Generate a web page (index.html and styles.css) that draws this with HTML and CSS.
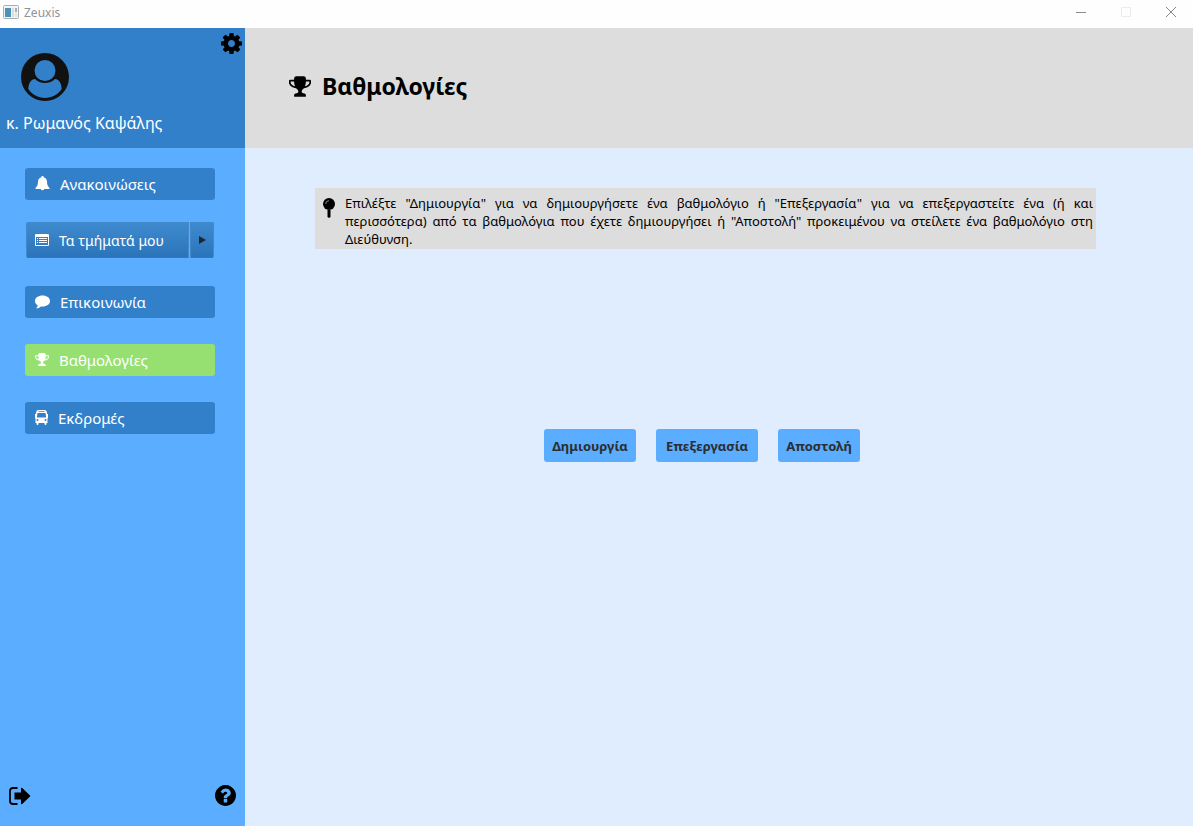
FILE: index.html
```html
<!DOCTYPE html>
<html lang="el">
<head>
<meta charset="utf-8">
<title>Zeuxis</title>
<link rel="stylesheet" href="styles.css">
</head>
<body>
<svg class="defs" aria-hidden="true">
  <symbol id="trophy" viewBox="64 128 1664 1536"><path d="M522 883q-74-162-74-371h-256v96q0 78 94.500 162t235.500 113zm1078-275v-96h-256q0 209-74 371 141-29 235.500-113t94.500-162zm128-128v128q0 71-41.500 143t-112 130-173 97.500-215.500 44.500q-42 54-95 95-38 34-52.500 72.500t-14.500 89.500q0 54 30.500 91t97.500 37q75 0 133.500 45.500t58.500 114.500v64q0 14-9 23t-23 9h-832q-14 0-23-9t-9-23v-64q0-69 58.500-114.500t133.500-45.500q67 0 97.500-37t30.500-91q0-51-14.500-89.500t-52.500-72.500q-53-41-95-95-113-5-215.500-44.500t-173-97.500-112-130-41.500-143v-128q0-40 28-68t68-28h288v-96q0-66 47-113t113-47h576q66 0 113 47t47 113v96h288q40 0 68 28t28 68z"/></symbol>
</svg>
<header class="titlebar">
  <svg class="app-icon" viewBox="0 0 16 14" aria-hidden="true">
    <rect x="0.500" y="0.500" width="15" height="13" rx="1" fill="#f4f4f4" stroke="#a9adb0"/>
    <rect x="2" y="3" width="6" height="9" fill="#4a92b8"/>
    <rect x="9" y="3" width="2" height="9" fill="#dcdcdc"/>
    <rect x="12" y="3" width="2" height="4" fill="#9fb0c4"/>
    <rect x="12" y="8" width="2" height="4" fill="#e3e3e3"/>
  </svg>
  <span class="app-name">Zeuxis</span>
  <button class="win-button" aria-label="Ελαχιστοποίηση"><svg width="12" height="12" viewBox="0 0 12 12"><path d="M1 6.500h10" stroke="#8b8b8b"/></svg></button>
  <button class="win-button" aria-label="Μεγιστοποίηση" disabled><svg width="12" height="12" viewBox="0 0 12 12"><path d="M1.500 1.500h9v9h-9z" fill="none" stroke="#e6edec"/></svg></button>
  <button class="win-button" aria-label="Κλείσιμο"><svg width="12" height="12" viewBox="0 0 12 12"><path d="M1 1l10 10M11 1L1 11" stroke="#858585"/></svg></button>
</header>
<div class="app">
  <aside class="sidebar">
    <div class="profile">
      <button class="icon-button settings" aria-label="Ρυθμίσεις">
        <svg width="21" height="21" viewBox="128 128 1536 1536"><path d="M1152 896q0-106-75-181t-181-75-181 75-75 181 75 181 181 75 181-75 75-181zm512-109v222q0 12-8 23t-20 13l-185 28q-19 54-39 91 35 50 107 138 10 12 10 25t-9 23q-27 37-99 108t-94 71q-12 0-26-9l-138-108q-44 23-91 38-16 136-29 186-7 28-36 28h-222q-14 0-24.500-8.500t-11.500-21.500l-28-184q-49-16-90-37l-141 107q-10 9-25 9-14 0-25-11-126-114-165-168-7-10-7-23 0-12 8-23 15-21 51-66.500t54-70.500q-27-50-41-99l-183-27q-13-2-21-12.500t-8-23.500v-222q0-12 8-23t19-13l186-28q14-46 39-92-40-57-107-138-10-12-10-24 0-10 9-23 26-36 98.500-107.500t94.500-71.500q13 0 26 10l138 107q44-23 91-38 16-136 29-186 7-28 36-28h222q14 0 24.500 8.500t11.500 21.500l28 184q49 16 90 37l142-107q9-9 24-9 13 0 25 10 129 119 165 170 7 8 7 22 0 12-8 23-15 21-51 66.500t-54 70.500q26 50 41 98l183 28q13 2 21 12.500t8 23.500z"/></svg>
      </button>
      <svg class="avatar" viewBox="0 0 48 48" aria-hidden="true">
        <circle cx="24" cy="24" r="24" fill="#111"/>
        <circle cx="24" cy="17.500" r="10.500" fill="#3280ca"/>
        <path d="M14 26C9.500 26.500 7.500 31 7.300 36C11 41.500 17 45 24 45S37 41.500 40.700 36C40.500 31 38.500 26.500 34 26C31.500 28.500 28 30 24 30S16.500 28.500 14 26Z" fill="#3280ca"/>
      </svg>
      <span class="user-name">κ. Ρωμανός Καψάλης</span>
    </div>
    <nav class="menu">
      <button class="menu-item">
        <svg class="menu-icon" viewBox="0 0 15 15"><path d="M7.500 0C8.300 0 8.700.6 8.600 1.200C11 1.800 12 3.600 12 5.600C12 9 13 10.500 14.500 12V13H9.300A1.900 1.900 0 0 1 5.700 13H.5V12C2 10.500 3 9 3 5.600C3 3.600 4 1.800 6.400 1.200C6.300.6 6.700 0 7.500 0Z"/></svg>
        Ανακοινώσεις
      </button>
      <div class="split">
        <button class="split-main">
          <svg class="menu-icon list" viewBox="0 0 14 12"><path fill-rule="evenodd" d="M1 0H13Q14 0 14 1V11Q14 12 13 12H1Q0 12 0 11V1Q0 0 1 0ZM1 3V11H13V3Z"/><path d="M2 4h1v1H2zM4 4h8v1H4zM2 6h1v1H2zM4 6h8v1H4zM2 8h1v1H2zM4 8h8v1H4z"/></svg>
          Τα τμήματά μου
        </button>
        <button class="split-arrow" aria-label="Προβολή τμημάτων"><svg width="7" height="8" viewBox="0 0 7 8"><path d="M0 0L7 4L0 8Z" fill="#1c2733"/></svg></button>
      </div>
      <button class="menu-item">
        <svg class="menu-icon" viewBox="0 0 15 15"><path d="M7.500 1.500C11.700 1.500 15 3.800 15 7S11.700 12.500 7.500 12.500L6 12.400C4.600 13.700 3 14.200 1.200 14.300C2 13.500 2.600 12.500 2.700 11.300C1 10.300 0 8.800 0 7C0 3.800 3.300 1.500 7.500 1.500Z"/></svg>
        Επικοινωνία
      </button>
      <button class="menu-item active" aria-current="page">
        <svg class="menu-icon trophy"><use href="#trophy"/></svg>
        Βαθμολογίες
      </button>
      <button class="menu-item">
        <svg class="menu-icon bus" viewBox="0 0 13 15"><path fill-rule="evenodd" d="M3.500 0H9.500Q11.500 0 11.800 2L12.200 4H13V8L12.500 8.500V13H11.500V14Q11.500 15 10.500 15T9.500 14V13H3.500V14Q3.500 15 2.500 15T1.500 14V13H.5V8.500L0 8V4H.8L1.200 2Q1.500 0 3.500 0ZM3.500 1V1.800H9.500V1ZM2.500 3L1.900 7.500H11.100L10.500 3ZM2.500 9A1 1 0 0 0 2.500 11A1 1 0 0 0 2.500 9ZM10.500 9A1 1 0 0 0 10.500 11A1 1 0 0 0 10.500 9Z"/></svg>
        Εκδρομές
      </button>
    </nav>
    <footer class="sidebar-footer">
      <button class="icon-button" aria-label="Αποσύνδεση">
        <svg width="22" height="18" viewBox="0 0 22 18"><path d="M8.500 1H4Q1 1 1 4V14Q1 17 4 17H8.500" fill="none" stroke="#000" stroke-width="1.800"/><path d="M5.500 5.500H12V1L13 .8L21.500 9L13 17.200L12 17V12.500H5.500Z"/></svg>
      </button>
      <button class="icon-button" aria-label="Βοήθεια">
        <svg width="21" height="21" viewBox="128 128 1536 1536"><path d="M1024 1376v-192q0-14-9-23t-23-9h-192q-14 0-23 9t-9 23v192q0 14 9 23t23 9h192q14 0 23-9t9-23zm256-672q0-88-55.500-163t-138.500-116-170-41q-243 0-371 213-15 24 8 42l132 100q7 6 19 6 16 0 25-12 53-68 86-92 34-24 86-24 48 0 85.500 26t37.500 59q0 38-20 61t-68 45q-63 28-115.500 86.500t-52.500 125.500v36q0 14 9 23t23 9h192q14 0 23-9t9-23q0-19 21.500-49.500t54.500-49.500q32-18 49-28.500t46-35 44.500-48 28-60.500 12.500-81zm384 192q0 209-103 385.500t-279.500 279.500-385.500 103-385.500-103-279.500-279.500-103-385.500 103-385.500 279.500-279.500 385.500-103 385.500 103 279.500 279.500 103 385.500z"/></svg>
      </button>
    </footer>
  </aside>
  <main class="main">
    <div class="page-header">
      <svg class="page-icon" aria-hidden="true"><use href="#trophy"/></svg>
      <h1 class="page-title">Βαθμολογίες</h1>
    </div>
    <section class="content">
      <div class="note">
        <svg class="pin" viewBox="0 0 12 20" aria-hidden="true"><circle cx="6" cy="6" r="6"/><path d="M4.500 12h3v7L6 20L4.500 19z"/><path d="M2.700 6A3.300 3.300 0 0 1 6 2.700" fill="none" stroke="#aaa" stroke-width=".8"/></svg>
        <p class="note-text">Επιλέξτε "Δημιουργία" για να δημιουργήσετε ένα βαθμολόγιο ή "Επεξεργασία" για να επεξεργαστείτε ένα (ή και περισσότερα) από τα βαθμολόγια που έχετε δημιουργήσει ή "Αποστολή" προκειμένου να στείλετε ένα βαθμολόγιο στη Διεύθυνση.</p>
      </div>
      <div class="actions">
        <button class="action">Δημιουργία</button>
        <button class="action wide">Επεξεργασία</button>
        <button class="action">Αποστολή</button>
      </div>
    </section>
  </main>
</div>
</body>
</html>
```
FILE: styles.css
```css
* {
  box-sizing: border-box;
}

body {
  margin: 0;
  min-height: 100vh;
  display: flex;
  flex-direction: column;
  background: #e0edff;
  color: #000;
  font-family: "Noto Sans", "Open Sans", sans-serif;
}

button {
  margin: 0;
  padding: 0;
  border: 0;
  background: none;
  color: inherit;
  font: inherit;
}

svg {
  display: block;
  flex: none;
}

.defs {
  position: absolute;
  width: 0;
  height: 0;
}

.titlebar {
  display: flex;
  align-items: center;
  height: 28px;
  padding: 0 0 4px 3px;
  background: #fefefe;
}

.app-icon {
  width: 16px;
  height: 14px;
}

.app-name {
  flex: 1;
  margin-left: 5px;
  color: #929292;
  font-size: 12px;
}

.win-button {
  display: flex;
  justify-content: center;
  align-items: center;
  width: 45px;
  height: 24px;
}

.app {
  flex: 1;
  display: flex;
}

.sidebar {
  flex: none;
  width: 245px;
  display: flex;
  flex-direction: column;
  background: #5aadff;
}

.profile {
  position: relative;
  height: 120px;
  padding: 25px 6px 0;
  background: #3280ca;
}

.settings {
  position: absolute;
  top: 5px;
  right: 3px;
}

.avatar {
  width: 48px;
  height: 48px;
  margin: 0 0 12px 15px;
}

.user-name {
  display: block;
  color: #fff;
  font-size: 16px;
  line-height: 20px;
}

.menu {
  flex: 1;
  display: flex;
  flex-direction: column;
  gap: 26px;
  padding: 20px 30px 20px 25px;
  color: #fff;
  font-size: 15px;
}

.menu-item {
  display: flex;
  align-items: center;
  gap: 10px;
  height: 32px;
  padding: 0 10px 1px;
  border-radius: 3px;
  background: #3280ca;
}

.menu-item.active {
  background: #96e072;
}

.menu-icon {
  width: 15px;
  height: 15px;
  fill: #fff;
}

.menu-icon.trophy {
  width: 14px;
  height: 13px;
}

.menu-icon.list {
  width: 14px;
  height: 12px;
}

.menu-icon.bus {
  width: 13px;
}

.split {
  display: flex;
  gap: 1px;
  height: 36px;
  margin: -4px 1px 2px;
  font-size: 14px;
}

.split-main,
.split-arrow {
  display: flex;
  align-items: center;
  border: 1px solid #4189cc;
  border-bottom-color: #3179bd;
  background: linear-gradient(#3f8acf, #2b74b9);
}

.split-main {
  flex: 1;
  gap: 10px;
  padding-left: 8px;
  border-radius: 2px 0 0 2px;
}

.split-arrow {
  justify-content: center;
  width: 24px;
  border-radius: 0 2px 2px 0;
}

.sidebar-footer {
  display: flex;
  justify-content: space-between;
  align-items: center;
  padding: 0 9px 20px;
}

.main {
  flex: 1;
  min-width: 0;
}

.page-header {
  display: flex;
  align-items: center;
  gap: 11px;
  height: 120px;
  padding: 0 44px 4px;
  background: #ddd;
}

.page-icon {
  width: 22px;
  height: 21px;
}

.page-title {
  margin: 0;
  font-size: 23px;
  line-height: 32px;
}

.content {
  padding: 40px 97px 40px 70px;
}

.note {
  display: flex;
  gap: 10px;
  padding: 6px 3px 0 8px;
  background: #ddd;
}

.pin {
  width: 12px;
  height: 20px;
  margin-top: 4px;
}

.note-text {
  flex: 1;
  margin: 0;
  padding-bottom: 1px;
  font-size: 13px;
  line-height: 18px;
  text-align: justify;
}

.actions {
  display: flex;
  justify-content: center;
  gap: 20px;
  margin-top: 180px;
  padding-right: 7px;
}

.action {
  height: 33px;
  padding: 0 8px;
  border-radius: 3px;
  background: #5aadff;
  color: #2e2e2e;
  font-size: 13px;
  font-weight: 700;
}

.action.wide {
  padding: 0 10px;
}
```
